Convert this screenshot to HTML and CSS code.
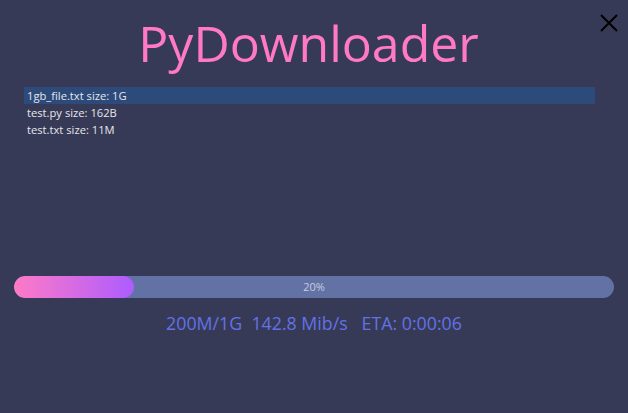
FILE: index.html
```html
<!DOCTYPE html>
<html>
<head>
<meta charset="utf-8">
<link rel="stylesheet" href="styles.css">
</head>
<body>
<div class="app">
  <header class="header">
    <h1 class="title">PyDownloader</h1>
    <button class="close" aria-label="Close">
      <svg width="18" height="18" viewBox="0 0 18 18"><path d="M1 1 L17 17 M17 1 L1 17" stroke="#000" stroke-width="2" fill="none"/></svg>
    </button>
  </header>
  <ul class="files">
    <li class="file selected">1gb_file.txt size: 1G</li>
    <li class="file">test.py size: 162B</li>
    <li class="file">test.txt size: 11M</li>
  </ul>
  <div class="progress">
    <div class="fill" style="width: 20%"></div>
    <span class="pct">20%</span>
  </div>
  <div class="status">200M/1G&nbsp;&nbsp;142.8 Mib/s&nbsp;&nbsp;&nbsp;ETA: 0:00:06</div>
</div>
</body>
</html>
```
FILE: styles.css
```css
html, body {
  margin: 0;
  padding: 0;
  background: #373a56;
  font-family: "Open Sans", "Noto Sans", sans-serif;
}
.app {
  width: 628px;
  height: 413px;
  display: flex;
  flex-direction: column;
}
.header {
  position: relative;
  height: 87px;
  display: flex;
  justify-content: center;
  padding-right: 11px;
}
.title {
  margin: 8px 0 0 0;
  font-weight: 400;
  font-size: 50px;
  line-height: 70px;
  color: #ff79c6;
}
.close {
  position: absolute;
  top: 14px;
  right: 10px;
  background: none;
  border: 0;
  padding: 0;
  width: 18px;
  height: 18px;
}
.files {
  list-style: none;
  margin: 0 33px 0 24px;
  padding: 0;
  height: 189px;
}
.file {
  height: 17px;
  line-height: 17px;
  padding-left: 3px;
  font-size: 11.2px;
  color: #e6e6ec;
}
.file.selected {
  background: #2c4a7a;
}
.progress {
  position: relative;
  margin: 0 14px;
  height: 22px;
  border-radius: 11px;
  background: #6272a4;
  overflow: hidden;
}
.fill {
  height: 100%;
  border-radius: 11px;
  background: linear-gradient(90deg, #ff7ac6, #ad5cff);
}
.pct {
  position: absolute;
  inset: 0;
  text-align: center;
  line-height: 22px;
  font-size: 11px;
  color: #c9cbe0;
}
.status {
  margin-top: 13px;
  text-align: center;
  font-size: 17.8px;
  color: #6272e6;
}
```
